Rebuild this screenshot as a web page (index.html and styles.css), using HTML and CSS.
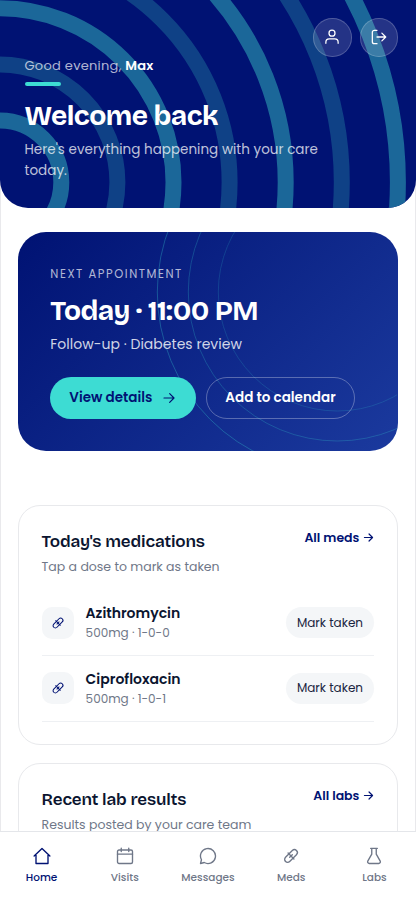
FILE: index.html
```
<!DOCTYPE html>
<html lang="en">
<head>
<meta charset="utf-8">
<meta name="viewport" content="width=device-width, initial-scale=1">
<title>Care portal</title>
<link rel="stylesheet" href="styles.css">
</head>
<body>
<svg class="sprite" aria-hidden="true">
  <symbol id="arrow" viewBox="0 0 24 24"><path d="M4.5 12h15M13 5.5l6.5 6.5-6.5 6.5"/></symbol>
  <symbol id="pill" viewBox="0 0 24 24"><g transform="rotate(-45 12 12)"><rect x="1.7" y="8.1" width="20.600" height="7.800" rx="3.900"/><path d="M12 6.500v11M9.500 12h5"/></g></symbol>
</svg>
<div class="app">
  <header class="hero">
    <svg class="hero-rings" viewBox="0 0 416 208" aria-hidden="true">
      <g class="ring-strong"><circle cx="-.5" cy="182.3" r="61.8"/><circle cx="-.5" cy="182.3" r="174"/><circle cx="-.5" cy="182.3" r="286.2"/><circle cx="-.5" cy="182.3" r="398.4"/></g>
      <g class="ring-soft"><circle cx="-.5" cy="182.3" r="117.9"/><circle cx="-.5" cy="182.3" r="230.1"/><circle cx="-.5" cy="182.3" r="342.3"/></g>
    </svg>
    <div class="hero-actions">
      <button class="round-btn" aria-label="Profile"><svg class="icon" viewBox="0 0 24 24"><circle cx="12" cy="6.3" r="4.5"/><path d="M2.800 21.500v-1.800a5 5 0 0 1 5-5h8.400a5 5 0 0 1 5 5v1.800"/></svg></button>
      <button class="round-btn" aria-label="Sign out"><svg class="icon" viewBox="0 0 24 24"><path d="M9 2H5a3 3 0 0 0-3 3v14a3 3 0 0 0 3 3H9M9 12h13M16.300 6.200l5.800 5.800-5.800 5.800"/></svg></button>
    </div>
    <div class="hero-text">
      <p class="greeting">Good evening, <strong>Max</strong></p>
      <span class="accent"></span>
      <h1>Welcome back</h1>
      <p class="lead">Here's everything happening with your care today.</p>
    </div>
  </header>

  <main>
    <section class="appointment">
      <svg class="appt-rings" viewBox="0 0 379 219" aria-hidden="true"><circle cx="319.300" cy="60" r="119" opacity=".17"/><circle cx="319.300" cy="60" r="149" opacity=".23"/><circle cx="319.300" cy="60" r="180" opacity=".3"/></svg>
      <p class="eyebrow">NEXT APPOINTMENT</p>
      <h2>Today · 11:00 PM</h2>
      <p class="reason">Follow-up · Diabetes review</p>
      <div class="appt-actions">
        <button class="btn btn-primary">View details <svg class="icon"><use href="#arrow"/></svg></button>
        <button class="btn btn-outline">Add to calendar</button>
      </div>
    </section>

    <section class="card meds">
      <div class="card-head">
        <div><h3>Today's medications</h3><p>Tap a dose to mark as taken</p></div>
        <a class="more">All meds <svg class="icon"><use href="#arrow"/></svg></a>
      </div>
      <ul>
        <li><span class="tile"><svg class="icon"><use href="#pill"/></svg></span><div class="med"><b>Azithromycin</b><small>500mg · 1-0-0</small></div><button class="mark">Mark taken</button></li>
        <li><span class="tile"><svg class="icon"><use href="#pill"/></svg></span><div class="med"><b>Ciprofloxacin</b><small>500mg · 1-0-1</small></div><button class="mark">Mark taken</button></li>
      </ul>
    </section>

    <section class="card labs">
      <div class="card-head">
        <div><h3>Recent lab results</h3><p>Results posted by your care team</p></div>
        <a class="more">All labs <svg class="icon"><use href="#arrow"/></svg></a>
      </div>
    </section>
  </main>

  <nav class="tabs">
    <a class="active"><svg class="icon" viewBox="0 0 24 24"><path d="M1.500 12L12 2l10.500 10M4 9.800V22h16V9.800"/></svg>Home</a>
    <a><svg class="icon" viewBox="0 0 24 24"><rect x="2" y="4" width="20" height="18" rx="2"/><path d="M2 9.500h20M7 1.500V6M17 1.500V6"/></svg>Visits</a>
    <a><svg class="icon" viewBox="0 0 24 24"><path d="M7 20.700A10 10 0 1 0 3.300 17L2 22z"/></svg>Messages</a>
    <a><svg class="icon"><use href="#pill"/></svg>Meds</a>
    <a><svg class="icon" viewBox="0 0 24 24"><path d="M7.500 1.800h9M9 1.800v7.700L3.700 18.800a2.200 2.200 0 0 0 2 3.200h12.600a2.200 2.200 0 0 0 2-3.200L15 9.500V1.800"/></svg>Labs</a>
  </nav>
</div>
</body>
</html>
```
FILE: styles.css
```
* { box-sizing: border-box; margin: 0; padding: 0; }
html, body { height: 100%; }
body { background: #fff; color: #0b1530; font-family: Poppins, Inter, sans-serif; overflow: hidden; }
button { border: 0; background: none; font: inherit; color: inherit; }
ul { list-style: none; }
h1, h2, h3 { font-family: "Bricolage Grotesque", Inter, sans-serif; white-space: nowrap; }
.sprite { display: none; }
.icon { fill: none; stroke: currentColor; stroke-width: 1.8; stroke-linecap: round; stroke-linejoin: round; flex: none; }

.app { height: 900px; display: flex; flex-direction: column; overflow: hidden; box-shadow: inset 1px 0 #e9e9ec, inset -1px 0 #e9e9ec; }

.hero { position: relative; flex: none; height: 208px; padding: 56px 24.5px 0; border-radius: 0 0 28px 28px; background: #001273; overflow: hidden; color: #fff; }
.hero-rings { position: absolute; inset: 0; width: 416px; height: 208px; fill: none; stroke-width: 16; }
.ring-strong { stroke: #1b6799; }
.ring-soft { stroke: #0f4186; }
.hero-actions { position: absolute; top: 18px; right: 18px; display: flex; gap: 8px; }
.round-btn { width: 38.500px; height: 38.500px; border-radius: 50%; display: grid; place-items: center; background: rgba(255,255,255,.14); border: 1px solid rgba(255,255,255,.2); }
.round-btn .icon { width: 16px; height: 16px; stroke-width: 1.9; }
.hero-text { position: relative; }
.greeting { font-size: 13px; line-height: 20px; letter-spacing: .26px; color: rgba(255,255,255,.7); }
.greeting strong { color: #fff; font-weight: 600; }
.accent { display: block; width: 36px; height: 4px; border-radius: 2px; background: #3ddcd3; margin-top: 6px; }
h1 { font-size: 28px; line-height: 34px; margin-top: 12.500px; font-weight: 700; letter-spacing: -.5px; }
.lead { font-size: 13.500px; line-height: 21px; margin-top: 6px; width: 310px; letter-spacing: .02px; color: rgba(255,255,255,.75); }

main { flex: 1; min-height: 0; overflow: hidden; padding: 24px 18.300px 0; }
.appointment { position: relative; height: 219px; border-radius: 28px; padding: 32px; background: linear-gradient(135deg, #001273, #1b3a9e); overflow: hidden; color: #fff; }
.appt-rings { position: absolute; left: 0; top: 0; width: 379px; height: 219px; fill: none; stroke: #3ddcd3; stroke-width: 1; }
.appointment > :not(.appt-rings) { position: relative; }
.eyebrow { font-size: 11.500px; line-height: 18px; letter-spacing: 1.550px; margin-top: .5px; color: rgba(255,255,255,.7); }
h2 { font-size: 28px; line-height: 34px; margin-top: 11.500px; font-weight: 700; letter-spacing: -.52px; }
.reason { font-size: 14px; line-height: 21px; margin-top: 5.500px; letter-spacing: .02px; color: rgba(255,255,255,.82); }
.appt-actions { display: flex; gap: 10px; margin-top: 22.500px; }
.btn { height: 42px; border-radius: 21px; padding: 0 19px; display: flex; align-items: center; gap: 9px; font-size: 13.500px; font-weight: 600; white-space: nowrap; }
.btn .icon { width: 16px; height: 16px; }
.btn-primary { background: #3ddcd3; color: #001273; }
.btn-outline { border: 1px solid rgba(255,255,255,.3); padding: 0 18px; }

.card { border: 1px solid #e8e9ec; border-radius: 22px; padding: 22px 22.300px; background: #fff; }
.meds { margin-top: 54px; height: 240px; }
.labs { margin-top: 18px; height: 240px; }
.card-head { display: flex; justify-content: space-between; }
h3 { font-size: 17px; line-height: 24px; font-weight: 600; margin-top: 2px; letter-spacing: -.17px; }
.card-head p { font-size: 12.500px; line-height: 19px; margin-top: 2.500px; color: #6f7788; }
.more { display: flex; align-items: center; gap: 3px; height: 19px; font-size: 12.500px; font-weight: 600; color: #001273; white-space: nowrap; }
.more .icon { width: 13px; height: 13px; stroke-width: 2.200; margin-right: -1px; }
.meds ul { margin-top: 15px; }
.meds li { height: 65.500px; display: flex; align-items: center; border-bottom: 1px solid #eef0f3; }
.tile { width: 32px; height: 32px; border-radius: 10px; background: #f4f6f8; color: #001273; display: grid; place-items: center; }
.tile .icon { width: 14px; height: 14px; }
.med { flex: 1; margin-left: 12px; }
.med b { display: block; font-size: 14px; line-height: 21px; font-weight: 600; }
.med small { display: block; font-size: 12px; line-height: 18px; color: #6f7788; }
.mark { height: 31px; border-radius: 16px; padding: 0 11.400px; background: #f4f6f8; font-size: 12px; color: #1a2440; }

.tabs { position: relative; flex: none; height: 69px; padding-top: 15px; border-top: 1px solid #e4e6ea; background: #fff; display: grid; grid-template-columns: repeat(5, 1fr); }
.tabs a { display: flex; flex-direction: column; align-items: center; gap: 5px; font-size: 10.500px; line-height: 16px; font-weight: 500; color: #6f7788; }
.tabs .icon { width: 18px; height: 18px; }
.tabs .active { color: #001273; }
```
